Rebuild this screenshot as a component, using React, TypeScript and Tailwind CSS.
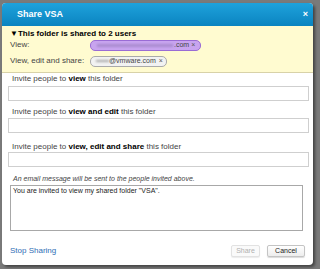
import React from "react";

export default function App() {
  return (
    <div className="w-[320px] h-[269px] bg-[#7a7a7a] overflow-hidden pt-[3px] pl-[2px]" style={{ fontFamily: '"Liberation Sans", Arial, sans-serif' }}>
      <div className="w-[311px] h-[262px] bg-white rounded-[4px] overflow-hidden shadow-[2px_2px_3px_rgba(0,0,0,0.45)] flex flex-col">
        <div className="h-[23px] shrink-0 bg-gradient-to-b from-[#1ea2dc] to-[#0a84c0] flex items-center justify-between pl-[15px] pr-[5px]">
          <span className="text-white font-bold text-[9px]">Share VSA</span>
          <span className="text-white font-bold text-[9px] leading-none">×</span>
        </div>
        <div className="h-[47px] shrink-0 bg-[#fffbd0] border-b border-[#d8d2a8] pl-[8px] pt-[3px] text-[8px] text-[#444]">
          <div className="h-[10px] flex items-center font-bold text-black text-[8px]">▼This folder is shared to 2 users</div>
          <div className="flex items-center h-[12px]">
            <span className="w-[80px]">View:</span>
            <span className="flex items-center h-[11px] w-[111px] rounded-[5px] bg-[#c8a4ef] border border-[#9a6cd4] pl-[6px] pr-[3px] text-[7px] text-[#444]">
              <span className="w-[76px] h-[3px] bg-[#a98bcf] blur-[1px]" />
              <span className="ml-[1px]">.com</span>
              <span className="ml-[2px] text-[#555]">×</span>
            </span>
          </div>
          <div className="flex items-center h-[12px] mt-[4px]">
            <span className="w-[80px]">View, edit and share:</span>
            <span className="flex items-center h-[11px] w-[77px] rounded-[5px] bg-[#f2f2f2] border border-[#aaa] pl-[5px] pr-[3px] text-[7px] text-[#444]">
              <span className="w-[13px] h-[2px] bg-[#aaa] blur-[1px]" />
              <span>@vmware.com</span>
              <span className="ml-[3px] text-[#555]">×</span>
            </span>
          </div>
        </div>
        <div className="pl-[6px] pr-[4px] text-[8px] text-[#444] flex-1 flex flex-col">
          <div className="mt-[1px] h-[10px] flex items-center pl-[4px]">Invite people to&nbsp;<b className="text-black">view</b>&nbsp;this folder</div>
          <div className="h-[15px] mt-[2px] border border-[#cfcfcf]" />
          <div className="mt-[6px] h-[10px] flex items-center pl-[4px]">Invite people to&nbsp;<b className="text-black">view and edit</b>&nbsp;this folder</div>
          <div className="h-[15px] mt-[1px] border border-[#cfcfcf]" />
          <div className="mt-[9px] h-[10px] flex items-center pl-[4px]">Invite people to&nbsp;<b className="text-black">view, edit and share</b>&nbsp;this folder</div>
          <div className="h-[15px] border border-[#cfcfcf]" />
          <div className="mt-[7px] h-[10px] flex items-center pl-[5px] italic text-[7px]">An email message will be sent to the people invited above.</div>
          <div className="h-[46px] mt-[1px] ml-[2px] mr-[6px] border border-[#a8a8a8] pl-[2px] pt-[1px] leading-[8px] text-[7px] text-[#222]">You are invited to view my shared folder "VSA".</div>
          <div className="flex items-center justify-between mt-[14px] h-[12px]">
            <span className="text-[#2f6eb5] ml-[2px]">Stop Sharing</span>
            <div className="flex gap-[7px] mr-[4px]">
              <span className="h-[12px] w-[29px] flex items-center justify-center rounded-[2px] border border-[#e2e2e2] bg-[#fafafa] text-[#b0b0b0] text-[7px] shadow-[0_1px_1px_rgba(0,0,0,0.08)]">Share</span>
              <span className="h-[12px] w-[38px] flex items-center justify-center rounded-[2px] border border-[#c4c4c4] bg-gradient-to-b from-white to-[#ededed] text-[#222] text-[7px] shadow-[0_1px_1px_rgba(0,0,0,0.15)]">Cancel</span>
            </div>
          </div>
        </div>
      </div>
    </div>
  );
}
